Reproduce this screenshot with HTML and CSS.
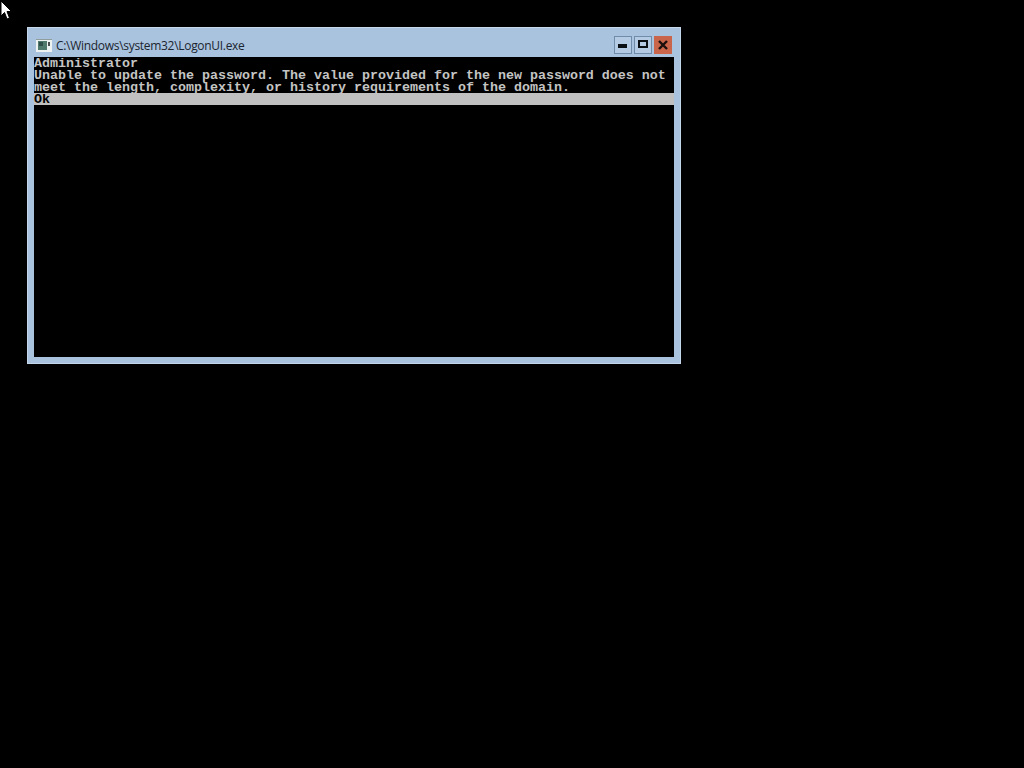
FILE: index.html
```html
<!DOCTYPE html>
<html lang="en">
<head>
<meta charset="utf-8">
<title>LogonUI</title>
<link rel="stylesheet" href="styles.css">
</head>
<body>
<svg class="cursor" width="12" height="21" viewBox="0 0 12 21"><path d="M1 1V16L4.500 12.500L7 19L9.500 18L7 11.500H11.500Z" fill="#fff" stroke="#000" stroke-width="1"/></svg>
<main class="window">
  <header class="titlebar">
    <svg class="app-icon" width="16" height="13" viewBox="0 0 16 13"><rect x="0" y="0" width="16" height="13" fill="#eef2f0"/><rect x="0" y="0" width="16" height="1" fill="#8f9d9d"/><rect x="2" y="2" width="9" height="9" fill="#4f7a6c"/><rect x="3" y="3" width="4" height="4" fill="#2f4f48"/><rect x="12" y="3" width="2" height="4" fill="#4a4f4f"/></svg>
    <span class="title">C:\Windows\system32\LogonUI.exe</span>
    <div class="controls">
      <div class="btn"><svg width="16" height="16" viewBox="0 0 16 16"><rect x="3" y="7" width="9" height="4" fill="#0a0f14"/></svg></div>
      <div class="btn"><svg width="16" height="16" viewBox="0 0 16 16"><rect x="4" y="4" width="8" height="6" fill="none" stroke="#0a0f14" stroke-width="2"/></svg></div>
      <div class="btn close"><svg width="16" height="16" viewBox="0 0 16 16"><path d="M4 4L12 12M12 4L4 12" stroke="#1a0f0c" stroke-width="2.400"/></svg></div>
    </div>
  </header>
  <section class="console">
    <div class="line">Administrator</div>
    <div class="line">Unable to update the password. The value provided for the new password does not</div>
    <div class="line">meet the length, complexity, or history requirements of the domain.</div>
    <div class="line selected">Ok</div>
  </section>
</main>
</body>
</html>
```
FILE: styles.css
```css
html, body {
  margin: 0;
  height: 100%;
  background: #000;
  overflow: hidden;
}
.cursor {
  position: absolute;
  left: 0;
  top: 0;
}
.window {
  position: absolute;
  left: 27px;
  top: 27px;
  width: 654px;
  height: 337px;
  box-sizing: border-box;
  padding: 0 6px 6px;
  border: 1px solid #c3d6ea;
  border-top-color: #c8d9ec;
  background: #a9c3de;
  display: flex;
  flex-direction: column;
}
.titlebar {
  height: 29px;
  display: flex;
  align-items: center;
  flex: none;
}
.app-icon {
  margin-left: 2px;
  margin-top: 6px;
  flex: none;
}
.title {
  margin-left: 4px;
  margin-top: 7px;
  font: 12px/16px "Open Sans", "Noto Sans", sans-serif;
  letter-spacing: -0.3px;
  color: #1b2530;
  white-space: nowrap;
}
.controls {
  margin-left: auto;
  margin-top: 5px;
  margin-right: 2px;
  display: flex;
  gap: 2px;
}
.btn {
  width: 16px;
  height: 16px;
  border: 1px solid #6f8cab;
  background: #b4cbe3;
}
.btn svg {
  display: block;
}
.btn.close {
  background: #c8654a;
  border-color: #c8654a;
}
.console {
  flex: 1;
  background: #000;
  color: #c4c4c4;
  font: bold 13.33px/14px "Liberation Mono", monospace;
}
.line {
  height: 12px;
  white-space: pre;
}
.selected {
  background: #c0c0c0;
  color: #000;
}
```
